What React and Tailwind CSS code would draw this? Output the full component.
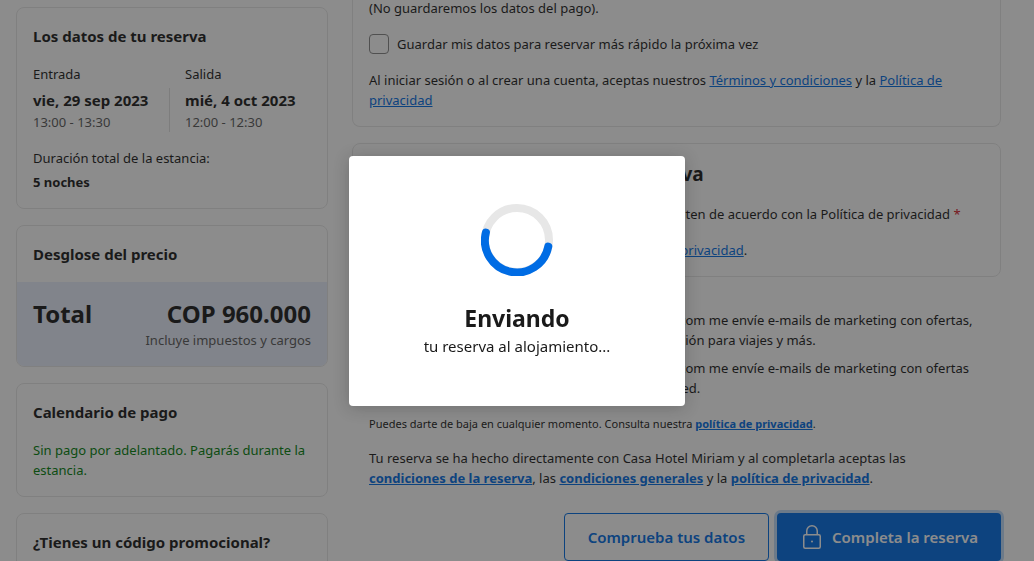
const link = "text-[#006ce4] underline";
const boldLink = "font-bold text-[#006ce4] underline";

function Card({ title, children, className = "" }) {
  return (
    <section className={`rounded-lg border border-[#e7e7e7] ${className}`}>
      <h2 className="px-4 pt-4 text-[15px] leading-6 font-bold">{title}</h2>
      {children}
    </section>
  );
}

function Sidebar() {
  return (
    <aside className="flex w-[312px] shrink-0 flex-col gap-4 pt-[7px]">
      <Card title="Los datos de tu reserva">
        <div className="px-4 pt-4 pb-4">
          <div className="grid grid-cols-[136px_1fr]">
            <p>Entrada</p>
            <p className="pl-4">Salida</p>
            <div className="mt-1">
              <p className="text-[15px] leading-6 font-bold">vie, 29 sep 2023</p>
              <p className="text-[#595959]">13:00 - 13:30</p>
            </div>
            <div className="mt-1 border-l border-[#e0e0e0] pl-[15px]">
              <p className="text-[15px] leading-6 font-bold">mié, 4 oct 2023</p>
              <p className="text-[#595959]">12:00 - 12:30</p>
            </div>
          </div>
          <p className="mt-4">Duración total de la estancia:</p>
          <p className="mt-1 font-bold">5 noches</p>
        </div>
      </Card>

      <Card title="Desglose del precio" className="overflow-hidden">
        <div className="mt-4 flex items-start justify-between bg-[#e9effc] p-4">
          <p className="text-2xl leading-8 font-bold">Total</p>
          <div className="text-right">
            <p className="text-2xl leading-8 font-bold">COP 960.000</p>
            <p className="text-[#595959]">Incluye impuestos y cargos</p>
          </div>
        </div>
      </Card>

      <Card title="Calendario de pago">
        <p className="p-4 text-[#008009]">Sin pago por adelantado. Pagarás durante la estancia.</p>
      </Card>

      <Card title="¿Tienes un código promocional?">
        <div className="h-20" />
      </Card>
    </aside>
  );
}

function Checkbox({ id }) {
  return (
    <input
      id={id}
      type="checkbox"
      className="size-5 shrink-0 appearance-none rounded-sm border border-[#868686] bg-white"
    />
  );
}

function LockIcon() {
  return (
    <svg viewBox="0 0 24 24" className="size-6" fill="none" stroke="currentColor" strokeWidth="1.5" aria-hidden="true">
      <rect x="3.75" y="9.75" width="16.5" height="13.5" rx="1.5" />
      <path d="M6.75 9.75V6a5.25 5.25 0 0 1 10.5 0v3.75" />
      <circle cx="12" cy="16.5" r="1" fill="currentColor" stroke="none" />
    </svg>
  );
}

function Main() {
  return (
    <main className="-mt-0.5 min-w-0 flex-1">
      <section className="rounded-b-lg border border-t-0 border-[#e7e7e7] px-4 pb-4">
        <p>(No guardaremos los datos del pago).</p>
        <div className="mt-4 flex gap-2">
          <Checkbox id="save" />
          <label htmlFor="save">Guardar mis datos para reservar más rápido la próxima vez</label>
        </div>
        <p className="mt-4">
          Al iniciar sesión o al crear una cuenta, aceptas nuestros{" "}
          <a href="#terminos" className={link}>Términos y condiciones</a> y la{" "}
          <a href="#privacidad" className={link}>Política de privacidad</a>
        </p>
      </section>

      <section className="mt-4 rounded-lg border border-[#e7e7e7] p-4">
        <h2 className="text-[19px] leading-7 font-bold">Privacidad de los datos y tu reserva</h2>
        <p className="mt-4">
          Acepto que todos mis datos personales ahora se traten de acuerdo con la Política de privacidad{" "}
          <span className="text-[#d4111e]">*</span>
        </p>
        <p className="mt-4">
          Puede consultar todos los detalles en la política de{" "}
          <a href="#privacidad" className={link}>privacidad</a>.
        </p>
      </section>

      <div className="mt-8 pl-[17px]">
        <div className="flex gap-2 pt-px">
          <Checkbox id="offers" />
          <label htmlFor="offers">
            Hoy doy mi consentimiento para que Booking.com me envíe e-mails de marketing con ofertas,
            <br />
            recomendaciones muy personalizadas, inspiración para viajes y más.
          </label>
        </div>
        <div className="mt-2 flex gap-2">
          <Checkbox id="transport" />
          <label htmlFor="transport">
            Hoy doy mi consentimiento para que Booking.com me envíe e-mails de marketing con ofertas
            <br />
            de servicios de transporte preparadas para usted.
          </label>
        </div>
        <p className="mt-4 text-[11px] leading-5">
          Puedes darte de baja en cualquier momento. Consulta nuestra{" "}
          <a href="#privacidad" className={boldLink}>política de privacidad</a>.
        </p>
        <p className="mt-3.5">
          Tu reserva se ha hecho directamente con Casa Hotel Miriam y al completarla aceptas las
          <br />
          <a href="#reserva" className={boldLink}>condiciones de la reserva</a>, las{" "}
          <a href="#generales" className={boldLink}>condiciones generales</a> y la{" "}
          <a href="#privacidad" className={boldLink}>política de privacidad</a>.
        </p>
      </div>

      <div className="mt-[25px] flex justify-end gap-2 text-[15px] font-semibold">
        <button type="button" className="h-12 rounded border border-[#006ce4] px-[23px] text-[#006ce4]">
          Comprueba tus datos
        </button>
        <button
          type="button"
          className="flex h-12 items-center gap-2 rounded bg-[#006ce4] px-[23px] text-white ring-3 ring-[#bfdaf8]"
        >
          <LockIcon />
          Completa la reserva
        </button>
      </div>
    </main>
  );
}

function SendingDialog() {
  return (
    <div className="fixed inset-0 flex items-center justify-center bg-[#1a1a1a]/50">
      <div
        role="dialog"
        aria-modal="true"
        aria-labelledby="sending"
        className="flex w-84 flex-col items-center rounded bg-white py-12 text-center shadow-[0_2px_16px_rgba(26,26,26,0.24)]"
      >
        <svg viewBox="0 0 72 72" className="size-18" fill="none" strokeWidth="8" aria-hidden="true">
          <circle cx="36" cy="36" r="32" stroke="#e7e7e7" />
          <path d="M4.9 28.5A32 32 0 1 0 67.3 42.6" stroke="#006ce4" strokeLinecap="round" />
        </svg>
        <h1 id="sending" className="mt-[26px] text-[23px] leading-8 font-bold">Enviando</h1>
        <p className="text-[15px] leading-6">tu reserva al alojamiento...</p>
      </div>
    </div>
  );
}

export default function App() {
  return (
    <div className="h-screen overflow-hidden bg-white font-['Noto_Sans','Open_Sans',sans-serif] text-[13px] leading-5 text-[#1a1a1a]">
      <div className="flex gap-6 pr-[33px] pl-4">
        <Sidebar />
        <Main />
      </div>
      <SendingDialog />
    </div>
  );
}
